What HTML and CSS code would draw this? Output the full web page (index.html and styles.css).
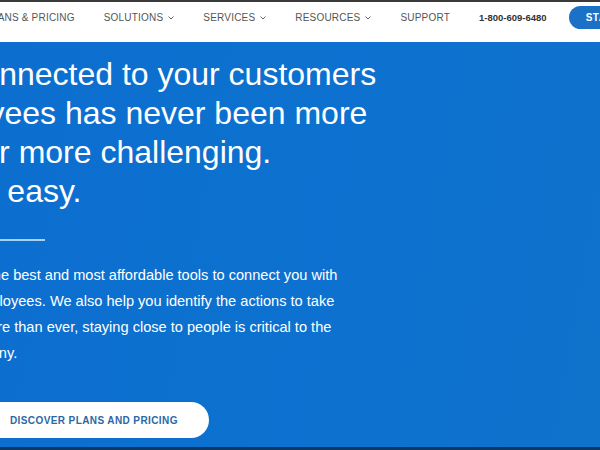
FILE: index.html
```html
<!DOCTYPE html>
<html lang="en">
<head>
<meta charset="utf-8">
<title>Stay connected</title>
<link rel="stylesheet" href="styles.css">
</head>
<body>
<div class="page">
  <header class="nav">
    <nav class="nav-items">
      <a class="nav-link">PLANS &amp; PRICING</a>
      <a class="nav-link">SOLUTIONS<svg class="chev" width="6" height="4" viewBox="0 0 6 4"><polyline points="0.5,0.5 3,3 5.5,0.5" fill="none" stroke="#666" stroke-width="1"/></svg></a>
      <a class="nav-link">SERVICES<svg class="chev" width="6" height="4" viewBox="0 0 6 4"><polyline points="0.5,0.5 3,3 5.5,0.5" fill="none" stroke="#666" stroke-width="1"/></svg></a>
      <a class="nav-link">RESOURCES<svg class="chev" width="6" height="4" viewBox="0 0 6 4"><polyline points="0.5,0.5 3,3 5.5,0.5" fill="none" stroke="#666" stroke-width="1"/></svg></a>
      <a class="nav-link">SUPPORT</a>
      <a class="nav-phone">1-800-609-6480</a>
      <a class="nav-cta">START FREE TRIAL</a>
    </nav>
  </header>
  <section class="hero">
    <div class="hero-inner">
      <h1 class="hero-title">Keeping connected to your customers<br>and employees has never been more<br>important or more challenging.<br>We make it easy.</h1>
      <div class="hero-rule"></div>
      <p class="hero-text">We give you access to the best and most affordable tools to connect you with<br>your customers and employees. We also help you identify the actions to take<br>to improve business. More than ever, staying close to people is critical to the<br>the growth of any company.</p>
      <a class="hero-btn">DISCOVER PLANS AND PRICING</a>
    </div>
  </section>
</div>
</body>
</html>
```
FILE: styles.css
```css
html, body {
  margin: 0;
  padding: 0;
  width: 600px;
  height: 450px;
  overflow: hidden;
  background: #ffffff;
  font-family: "Liberation Sans", Arial, sans-serif;
}

.page {
  width: 600px;
  height: 450px;
  overflow: hidden;
  display: flex;
  flex-direction: column;
}

.nav {
  border-top: 2px solid #3a3a3a;
  box-sizing: border-box;
  height: 42px;
  background: #ffffff;
  display: flex;
  align-items: flex-start;
  padding-top: 4px;
  flex: none;
}

.nav-items {
  display: flex;
  align-items: center;
  gap: 29px;
  margin-left: -15px;
  height: 23px;
  white-space: nowrap;
}

.nav-link {
  font-size: 10px;
  letter-spacing: 0.2px;
  color: #555555;
  display: flex;
  align-items: center;
}

.chev {
  margin-left: 5px;
  margin-top: 1px;
}

.nav-phone {
  font-size: 9.5px;
  font-weight: bold;
  color: #333333;
  margin-right: -7px;
}

.nav-cta {
  background: #1a71c6;
  color: #ffffff;
  font-size: 10px;
  font-weight: bold;
  letter-spacing: 0.5px;
  height: 23px;
  border-radius: 12px;
  padding: 0 17px;
  display: flex;
  align-items: center;
}

.hero {
  flex: none;
  height: 405px;
  border-bottom: 3px solid #0b3866;
  background: linear-gradient(100deg, #0c6fcf 0%, #0d71d0 60%, #0f72cb 100%);
  overflow: hidden;
}

.hero-inner {
  margin-left: -161px;
  padding-top: 13px;
  color: #ffffff;
}

.hero-title {
  margin: 0;
  font-size: 32px;
  line-height: 39px;
  font-weight: normal;
  white-space: nowrap;
}

.hero-rule {
  margin-top: 28px;
  width: 206px;
  height: 2px;
  background: #a6d2f6;
}

.hero-text {
  margin: 21px 0 0 0;
  font-size: 14.6px;
  line-height: 26px;
  white-space: nowrap;
}

.hero-btn {
  margin-top: 36px;
  margin-left: 140px;
  display: inline-flex;
  align-items: center;
  height: 36px;
  padding: 0 31px;
  background: #ffffff;
  border-radius: 18px;
  color: #2a68a6;
  font-size: 10px;
  font-weight: bold;
  letter-spacing: 0.4px;
  white-space: nowrap;
}
```
